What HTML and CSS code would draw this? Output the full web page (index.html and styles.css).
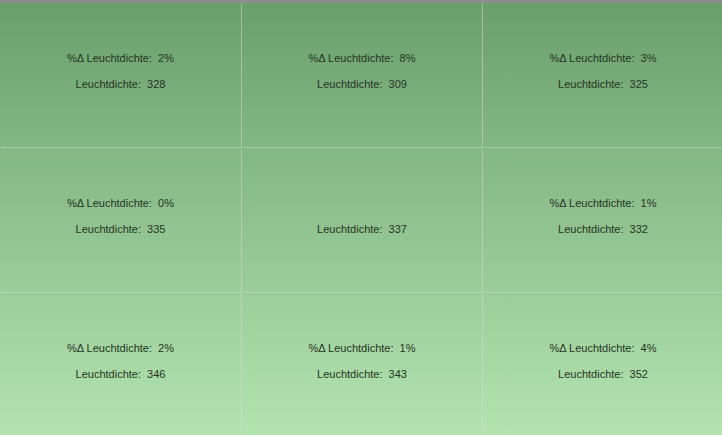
FILE: index.html
```html
<!DOCTYPE html>
<html>
<head>
<meta charset="utf-8">
<link rel="stylesheet" href="styles.css">
</head>
<body>
<div class="topbar"></div>
<div class="grid">
  <div class="cell"><div class="line">%Δ Leuchtdichte:  2%</div><div class="line">Leuchtdichte:  328</div></div>
  <div class="cell"><div class="line">%Δ Leuchtdichte:  8%</div><div class="line">Leuchtdichte:  309</div></div>
  <div class="cell"><div class="line">%Δ Leuchtdichte:  3%</div><div class="line">Leuchtdichte:  325</div></div>
  <div class="cell"><div class="line">%Δ Leuchtdichte:  0%</div><div class="line">Leuchtdichte:  335</div></div>
  <div class="cell"><div class="line"></div><div class="line">Leuchtdichte:  337</div></div>
  <div class="cell"><div class="line">%Δ Leuchtdichte:  1%</div><div class="line">Leuchtdichte:  332</div></div>
  <div class="cell"><div class="line">%Δ Leuchtdichte:  2%</div><div class="line">Leuchtdichte:  346</div></div>
  <div class="cell"><div class="line">%Δ Leuchtdichte:  1%</div><div class="line">Leuchtdichte:  343</div></div>
  <div class="cell"><div class="line">%Δ Leuchtdichte:  4%</div><div class="line">Leuchtdichte:  352</div></div>
</div>
</body>
</html>
```
FILE: styles.css
```css
html, body {
  margin: 0;
  padding: 0;
  width: 722px;
  height: 435px;
  overflow: hidden;
}
body {
  background: linear-gradient(to bottom, #6a9f6c 0px, #b3e4b0 435px);
  font-family: "Liberation Sans", Arial, sans-serif;
  font-size: 11px;
  color: #253525;
}
.topbar {
  height: 3px;
  background: #8c8f8c;
}
.grid {
  display: grid;
  grid-template-columns: 241px 240px 240px;
  grid-template-rows: 144px 144px 142px;
  gap: 1px;
  height: 432px;
}
.cell {
  padding-top: 42px;
  text-align: center;
  box-sizing: border-box;
  box-shadow: 1px 1px 0 rgba(215, 220, 215, 0.5);
}
.line {
  height: 26px;
  line-height: 26px;
  white-space: pre;
}
```
